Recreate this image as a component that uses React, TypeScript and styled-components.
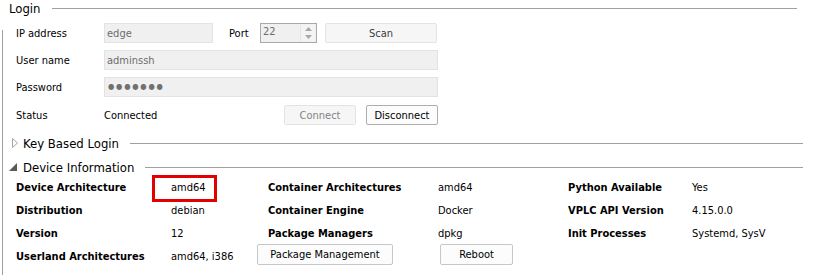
import React from "react";
import styled, { createGlobalStyle } from "styled-components";

const Global = createGlobalStyle`
  html, body { margin: 0; padding: 0; background: #ffffff; }
  body { width: 813px; height: 275px; overflow: hidden; }
  * { box-sizing: border-box; }
`;

const UI_FONT = `"Segoe UI", "DejaVu Sans Condensed", "Noto Sans", sans-serif`;
const BOLD_FONT = `Tahoma, "DejaVu Sans Condensed", "Liberation Sans", sans-serif`;

const Root = styled.div`
  width: 813px;
  height: 275px;
  font-family: ${UI_FONT};
  font-size: 11px;
  color: #000;
  display: flex;
  flex-direction: column;
`;

const Legend = styled.div`
  height: 16px;
  display: flex;
  align-items: center;
  padding-left: 9px;
  padding-right: 16px;
  font-size: 13px;
`;

const Rule = styled.div<{ $gap: number }>`
  flex: 1;
  height: 1px;
  background: #a0a0a0;
  margin-left: ${(p) => p.$gap}px;
`;

const Body = styled.div`
  position: relative;
  flex: 1;
  padding-top: 7px;
  &::before {
    content: "";
    position: absolute;
    left: 2px;
    top: 14px;
    bottom: 0;
    width: 1px;
    background: #a0a0a0;
  }
`;

const Form = styled.div`
  margin-left: 16px;
  width: 422px;
  display: flex;
  flex-direction: column;
  gap: 7px;
`;

const Row = styled.div<{ $top?: number }>`
  height: 20px;
  display: flex;
  align-items: center;
  margin-top: ${(p) => p.$top ?? 0}px;
`;

const Label = styled.span<{ $w: number; $ml?: number }>`
  width: ${(p) => p.$w}px;
  margin-left: ${(p) => p.$ml ?? 0}px;
  flex: none;
`;

const Input = styled.div<{ $w?: number }>`
  height: 20px;
  width: ${(p) => (p.$w ? `${p.$w}px` : "auto")};
  flex: ${(p) => (p.$w ? "none" : "1")};
  background: #f0f0f0;
  border: 1px solid #e3e3e3;
  color: #6d6d6d;
  padding-left: 2px;
  display: flex;
  align-items: center;
  line-height: 1;
`;

const Dots = styled.span`
  letter-spacing: 1.8px;
  font-size: 8px;
  color: #707070;
  padding-left: 1px;
`;

const Spin = styled.div`
  width: 57px;
  height: 20px;
  flex: none;
  border: 1px solid #a9a9a9;
  background: #f0f0f0;
  color: #6d6d6d;
  display: flex;
  align-items: stretch;
  padding: 1px;
`;

const SpinText = styled.span`
  flex: 1;
  padding-left: 1px;
  line-height: 13px;
`;

const SpinArrows = styled.div`
  width: 15px;
  display: flex;
  flex-direction: column;
  background: #f4f4f4;
  border-left: 1px solid #e6e6e6;
`;

const Arrow = styled.div`
  flex: 1;
  display: flex;
  align-items: center;
  justify-content: center;
`;

const Button = styled.div<{ $w: number; $variant?: "disabled" | "normal" | "soft"; $ml?: number }>`
  width: ${(p) => p.$w}px;
  height: 20px;
  flex: none;
  margin-left: ${(p) => p.$ml ?? 0}px;
  border-radius: 2px;
  display: flex;
  align-items: center;
  justify-content: center;
  border: 1px solid
    ${(p) => (p.$variant === "disabled" ? "#e3e3e3" : p.$variant === "soft" ? "#c7c7c7" : "#adadad")};
  background: ${(p) => (p.$variant === "disabled" ? "#f6f6f6" : "#fcfcfc")};
  color: ${(p) => (p.$variant === "disabled" ? "#838383" : "#000")};
`;

const ScanButton = styled(Button)`
  color: #3c3c3c;
`;

const Spacer = styled.div`
  flex: 1;
`;

const SectionHeader = styled.div<{ $top: number }>`
  height: 18px;
  margin-top: ${(p) => p.$top}px;
  display: flex;
  align-items: center;
  padding-left: 9px;
  padding-right: 10px;
  font-size: 13px;
`;

const Toggle = styled.svg`
  width: 14px;
  height: 10px;
  flex: none;
`;

const InfoGrid = styled.div`
  padding-left: 16px;
  display: grid;
  grid-template-columns: 155px 97px 170px 130px 124px 1fr;
  grid-auto-rows: 23px;
  align-items: center;
`;

const Key = styled.span`
  font-family: ${BOLD_FONT};
  font-weight: bold;
  font-size: 11px;
`;

const Value = styled.span`
  position: relative;
`;

const Highlight = styled.span`
  position: absolute;
  left: -19px;
  top: -6px;
  width: 65px;
  height: 27px;
  border: 3px solid #e30000;
`;

const GridButton = styled(Button)`
  height: 21px;
  align-self: start;
  margin-top: -1px;
`;

export default function App() {
  return (
    <Root>
      <Global />
      <Legend>
        <span>Login</span>
        <Rule $gap={11} />
      </Legend>
      <Body>
        <Form>
          <Row>
            <Label $w={88}>IP address</Label>
            <Input $w={109}>edge</Input>
            <Label $w={31} $ml={16}>Port</Label>
            <Spin>
              <SpinText>22</SpinText>
              <SpinArrows>
                <Arrow>
                  <svg width="7" height="4" viewBox="0 0 7 4"><polygon points="3.5,0 7,4 0,4" fill="#a8a8a8" /></svg>
                </Arrow>
                <Arrow>
                  <svg width="7" height="4" viewBox="0 0 7 4"><polygon points="0,0 7,0 3.5,4" fill="#a8a8a8" /></svg>
                </Arrow>
              </SpinArrows>
            </Spin>
            <ScanButton $w={112} $ml={8} $variant="disabled">Scan</ScanButton>
          </Row>
          <Row>
            <Label $w={88}>User name</Label>
            <Input>adminssh</Input>
          </Row>
          <Row>
            <Label $w={88}>Password</Label>
            <Input><Dots>●●●●●●●</Dots></Input>
          </Row>
          <Row $top={1}>
            <Label $w={88}>Status</Label>
            <span>Connected</span>
            <Spacer />
            <Button $w={72} $variant="disabled">Connect</Button>
            <Button $w={72} $ml={10}>Disconnect</Button>
          </Row>
        </Form>
        <SectionHeader $top={9}>
          <Toggle viewBox="0 0 14 10">
            <polygon points="3.5,0.5 8.5,5 3.5,9.5" fill="none" stroke="#a6a6a6" strokeWidth="1" />
          </Toggle>
          <span>Key Based Login</span>
          <Rule $gap={11} />
        </SectionHeader>
        <SectionHeader $top={6}>
          <Toggle viewBox="0 0 14 10">
            <polygon points="8,1 8,9 0,9" fill="#595959" />
          </Toggle>
          <span>Device Information</span>
          <Rule $gap={11} />
        </SectionHeader>
        <InfoGrid>
          <Key>Device Architecture</Key>
          <Value>
            amd64
            <Highlight />
          </Value>
          <Key>Container Architectures</Key>
          <Value>amd64</Value>
          <Key>Python Available</Key>
          <Value>Yes</Value>

          <Key>Distribution</Key>
          <Value>debian</Value>
          <Key>Container Engine</Key>
          <Value>Docker</Value>
          <Key>VPLC API Version</Key>
          <Value>4.15.0.0</Value>

          <Key>Version</Key>
          <Value>12</Value>
          <Key>Package Managers</Key>
          <Value>dpkg</Value>
          <Key>Init Processes</Key>
          <Value>Systemd, SysV</Value>

          <Key>Userland Architectures</Key>
          <Value>amd64, i386</Value>
          <GridButton $w={136} $ml={-11} $variant="soft">Package Management</GridButton>
          <GridButton $w={73} $ml={2} $variant="soft">Reboot</GridButton>
          <span />
          <span />
        </InfoGrid>
      </Body>
    </Root>
  );
}
